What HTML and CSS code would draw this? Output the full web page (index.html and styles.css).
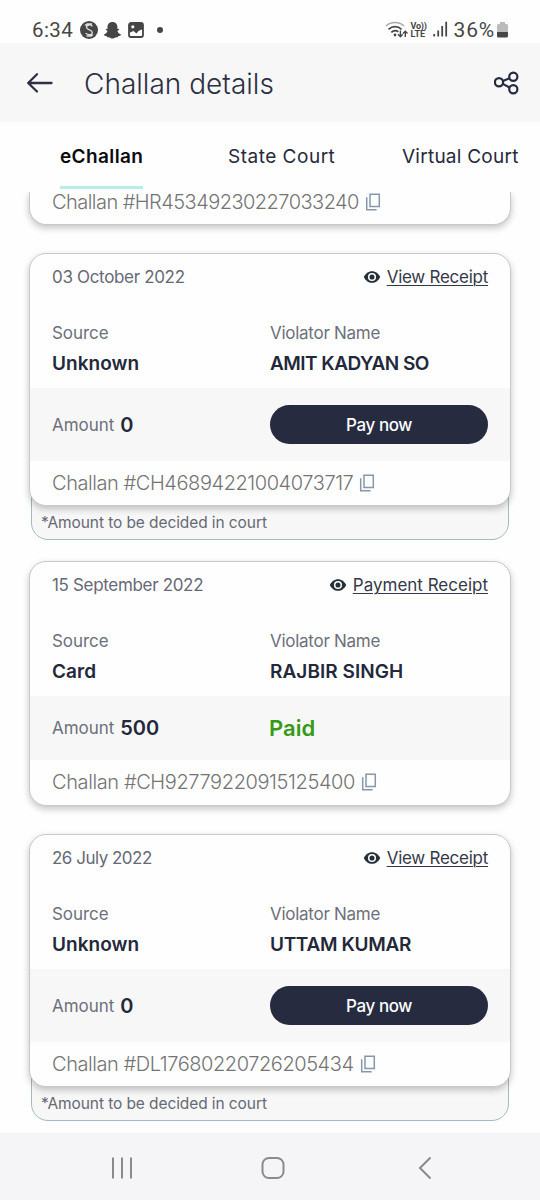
FILE: index.html
```html
<!DOCTYPE html>
<html lang="en">
<head>
<meta charset="utf-8">
<title>Challan details</title>
<link rel="stylesheet" href="styles.css">
</head>
<body>
<svg width="0" height="0" class="defs">
  <symbol id="copy" viewBox="0 0 16 18"><path d="M5 1.200h9.300v12.200H5zM1.700 4.200v12.500h9.900" fill="none" stroke="#8796a9" stroke-width="1.500"/></symbol>
  <symbol id="eye" viewBox="0 0 18 14"><path d="M.8 7C2.400 3.500 5.400 1.200 9 1.200S15.600 3.500 17.200 7C15.600 10.500 12.600 12.800 9 12.800S2.400 10.500.8 7z" fill="#25323a"/><circle cx="9" cy="7" r="3.300" fill="none" stroke="#fff" stroke-width="1.500"/></symbol>
</svg>
<header class="status">
  <span class="time">6:34</span>
  <svg class="notif" width="80" height="20" viewBox="0 0 80 20">
    <circle cx="9" cy="10" r="9" fill="#464646"/>
    <path d="M12.500 6.300C11 4.300 6.500 4.500 6.500 7.200c0 3 5.800 2.200 5.800 5.200 0 2.800-4.800 3-6.600.8M5 5.500l2-1.500h5M13 14.800l-2 1.200H6.500" fill="none" stroke="#ddd" stroke-width="1.300"/>
    <path d="M32.400 2c3.300 0 5 2.200 5 5v2l1.500-.3.200 1-1.700 1.200c.6 2 1.900 3 3.700 3.600-.2 1.200-1.600 1.300-2.800 1.600l-.5 1.200c-1.500-.2-2.600 0-3.500.6-1.200.8-2.500.8-3.700 0-.9-.6-2-.8-3.500-.6l-.5-1.200c-1.200-.3-2.600-.4-2.800-1.600 1.800-.6 3.100-1.600 3.700-3.600l-1.700-1.200.2-1 1.500.3V7c0-2.800 1.700-5 4.900-5z" fill="#464646"/>
    <rect x="49" y="3" width="14" height="14" rx="2" fill="none" stroke="#464646" stroke-width="1.800"/>
    <path d="M49 10V4q0-1 1-1h12q1 0 1 1v7l-1.500-1.500-3 1.500-2 2.500-3-2.500L49 13z" fill="#464646"/>
    <circle cx="52.800" cy="6.800" r="1.600" fill="#fefefe"/>
  </svg>
  <i class="dot"></i>
  <div class="signals">
    <svg width="23" height="18" viewBox="0 0 23 18"><g fill="none" stroke-width="1.700"><path d="M1 5C6 .300 14 .300 19 5" stroke="#aaa"/><path d="M3.500 8.300c4-3.600 9.300-3.600 13 0M6.300 11.400c2-1.900 5-2.100 7-.6" stroke="#464646"/><path d="M15.400 9.500v6M13 13.300l2.400 2.400 2.300-2.400M20.300 16v-5.500M18 12.500l2.300-2.300 2.300 2.300" stroke="#464646" stroke-width="1.400"/></g><circle cx="10" cy="14" r="1.400" fill="#464646"/></svg>
    <div class="volte"><span>Vo))</span><span class="lte">LTE</span></div>
    <svg width="15" height="16" viewBox="0 0 15 16"><path d="M1.200 13v2.500M5.200 9.500v6M9.200 5v10.500M13.200.8v14.700" stroke="#464646" stroke-width="1.800"/></svg>
    <span class="pct">36%</span>
    <svg class="batt" width="11" height="16" viewBox="0 0 11 16"><path d="M3 0h5v2h1.500Q11 2 11 3.500V10H0V3.500Q0 2 1.500 2H3z" fill="#bbb"/><path d="M0 10h11v4q0 1.500-1.500 1.500h-8Q0 15.500 0 14z" fill="#464646"/></svg>
  </div>
</header>
<div class="bar">
  <svg width="28" height="22" viewBox="0 0 28 22"><path d="M25.500 11H2.200M11 2.200L2.200 11l8.800 8.500" fill="none" stroke="#2c3042" stroke-width="2.300" stroke-linecap="round" stroke-linejoin="round"/></svg>
  <h1>Challan details</h1>
  <svg class="share" width="26" height="24" viewBox="0 0 26 24"><g fill="none" stroke="#262b40" stroke-width="2.200"><circle cx="5" cy="11.300" r="4.100"/><circle cx="19.300" cy="5.700" r="4.100"/><circle cx="19.300" cy="18.300" r="4.100"/><path d="M8.900 9.900l6.600-2.600M8.800 12.900l6.800 3.600"/></g></svg>
</div>
<nav class="tabs">
  <a class="tab active">eChallan</a>
  <a class="tab state">State Court</a>
  <a class="tab virtual">Virtual Court</a>
</nav>
<main class="list">
  <article class="card cut"><div class="number"><span>Challan #HR45349230227033240</span><svg class="copy"><use href="#copy"/></svg></div></article>

  <article class="card amit">
    <div class="top"><span class="date">03 October 2022</span><span class="receipt"><svg class="eye"><use href="#eye"/></svg><a class="view">View Receipt</a></span></div>
    <div class="info"><div><span class="label source">Source</span><b>Unknown</b></div><div><span class="label">Violator Name</span><b class="caps">AMIT KADYAN SO</b></div></div>
    <div class="pay"><div><span class="amount">Amount</span><b>0</b></div><button>Pay now</button></div>
    <div class="number"><span>Challan #CH46894221004073717</span><svg class="copy"><use href="#copy"/></svg></div>
  </article>
  <p class="note">*Amount to be decided in court</p>

  <article class="card short">
    <div class="top"><span class="date">15 September 2022</span><span class="receipt"><svg class="eye"><use href="#eye"/></svg><a class="payment">Payment Receipt</a></span></div>
    <div class="info"><div><span class="label source">Source</span><b>Card</b></div><div><span class="label">Violator Name</span><b>RAJBIR SINGH</b></div></div>
    <div class="pay"><div><span class="amount">Amount</span><b>500</b></div><span class="paid">Paid</span></div>
    <div class="number"><span>Challan #CH92779220915125400</span><svg class="copy"><use href="#copy"/></svg></div>
  </article>

  <article class="card uttam">
    <div class="top"><span class="date">26 July 2022</span><span class="receipt"><svg class="eye"><use href="#eye"/></svg><a class="view">View Receipt</a></span></div>
    <div class="info"><div><span class="label source">Source</span><b>Unknown</b></div><div><span class="label">Violator Name</span><b class="caps">UTTAM KUMAR</b></div></div>
    <div class="pay"><div><span class="amount">Amount</span><b>0</b></div><button>Pay now</button></div>
    <div class="number"><span>Challan #DL17680220726205434</span><svg class="copy"><use href="#copy"/></svg></div>
  </article>
  <p class="note">*Amount to be decided in court</p>
</main>
<footer class="nav">
  <svg width="22" height="24" viewBox="0 0 22 24"><path d="M2 1.500v21M11 1.500v21M20 1.500v21" stroke="#8a8a8d" stroke-width="2"/></svg>
  <svg width="24" height="24" viewBox="0 0 24 24"><rect x="1.500" y="2" width="21" height="20" rx="6.500" fill="none" stroke="#8a8a8d" stroke-width="2"/></svg>
  <svg width="14" height="24" viewBox="0 0 14 24"><path d="M12.500 1.500L2 12l10.500 10.500" fill="none" stroke="#8a8a8d" stroke-width="2"/></svg>
</footer>
</body>
</html>
```
FILE: styles.css
```css
* { box-sizing: border-box; }
body { margin: 0; width: 540px; height: 1200px; overflow: hidden; background: #fefefe; font-family: Inter, "Noto Sans", sans-serif; color: #23283a; display: flex; flex-direction: column; white-space: nowrap; }
svg { flex: none; display: block; }
.defs { position: absolute; }
.status { flex: none; height: 43px; padding: 17px 32px 0 32px; display: flex; color: #464646; }
.time { font: 20.500px/26px Roboto, sans-serif; width: 48px; letter-spacing: .4px; }
.notif { margin-top: 3px; }
.dot { width: 6px; height: 6px; border-radius: 50%; background: #464646; margin: 10px 0 0 -3px; }
.signals { margin-left: auto; display: flex; align-items: flex-start; }
.signals > svg { margin-top: 4px; }
.volte { width: 16px; margin: 5px 6px 0 3px; font: 700 9px/8px Roboto, sans-serif; letter-spacing: -.3px; display: flex; flex-direction: column; }
.lte { letter-spacing: 0; }
.pct { font: 21px/26px Roboto, sans-serif; margin-left: 6px; letter-spacing: .8px; }
.signals .batt { margin-left: 2px; margin-top: 5px; }
.bar { flex: none; height: 79px; background: #f7f7f8; padding: 1px 20px 0 26px; display: flex; align-items: center; }
.bar h1 { margin: 1px 0 0 30px; font-size: 28px; font-weight: 300; line-height: 36px; letter-spacing: .02px; color: #2c3042; }
.share { margin-left: auto; }
.tabs { flex: none; height: 70px; display: flex; padding-left: 60px; }
.tab { height: 67px; font-size: 19px; line-height: 69px; letter-spacing: .5px; color: #262a3b; }
.active { width: 83px; font-weight: 600; color: #0b0b0f; border-bottom: 3px solid #b8efe2; letter-spacing: .38px; }
.state { margin-left: 85px; width: 107px; }
.virtual { margin-left: 67px; letter-spacing: .25px; }
.list { flex: 1; overflow: hidden; padding: 0 29px; }
.card { position: relative; z-index: 1; height: 253px; border: 1px solid #c9c9c9; border-radius: 17px; background: #fefefe; box-shadow: 0 3px 7px rgba(0,0,0,.23); overflow: hidden; }
.cut { height: 33px; margin-bottom: 28px; border-top: 0; border-radius: 0 0 17px 17px; overflow: visible; }
.short { height: 245px; margin-bottom: 28px; }
.top { height: 46px; padding: 0 22px; display: flex; justify-content: space-between; align-items: center; }
.date { font-size: 17px; letter-spacing: -.33px; color: #666975; }
.uttam .date { letter-spacing: -.5px; }
.receipt { display: flex; align-items: center; gap: 6px; }
.receipt a { font-size: 17px; color: #353947; text-decoration: underline; text-underline-offset: 2px; text-decoration-thickness: 1px; }
.receipt .view { letter-spacing: -.26px; }
.eye { width: 18px; height: 14px; }
.info { height: 88px; padding: 21px 22px 0; display: grid; grid-template-columns: 218px 1fr; }
.info div { display: flex; flex-direction: column; }
.label, .amount { font-size: 17px; line-height: 24px; letter-spacing: -.27px; color: #6d707a; }
.source, .amount { letter-spacing: -.05px; }
.info b { font-size: 19px; line-height: 24px; margin-top: 7px; font-weight: 600; letter-spacing: .05px; }
.amit .caps { letter-spacing: -.52px; }
.uttam .caps { letter-spacing: -.33px; }
.pay { height: 73px; padding: 0 22px; background: #f7f7f7; display: grid; grid-template-columns: 218px 218px; align-items: center; }
.pay div { display: flex; align-items: center; gap: 6px; }
.pay b { font-size: 20px; font-weight: 600; }
.short .pay { height: 64px; }
button { width: 218px; height: 39px; padding: 0; border: 0; border-radius: 20px; background: #262b40; color: #fefefe; font: 500 17px Inter, sans-serif; letter-spacing: -.4px; }
.paid { font-size: 22px; font-weight: 600; color: #359b16; margin-left: -1px; }
.number { height: 44px; padding: 0 22px; display: flex; align-items: center; gap: 6px; font-size: 20px; font-weight: 300; letter-spacing: -.43px; color: #747474; }
.short .number { letter-spacing: -.39px; }
.cut .number { height: 20px; line-height: 20px; letter-spacing: -.54px; }
.copy { width: 16px; height: 18px; }
.note { width: 478px; height: 50px; margin: -16px 0 21px 2px; padding: 22px 9px 0; border: 1px solid #a5bac0; border-radius: 0 0 17px 17px; background: #f7f7f7; font-size: 15.500px; line-height: 20px; letter-spacing: -.09px; color: #666975; }
.nav { flex: none; height: 67px; background: #f5f5f8; padding: 2px 108px 0 111px; display: grid; grid-template-columns: 150px 1fr auto; align-items: center; }
```
